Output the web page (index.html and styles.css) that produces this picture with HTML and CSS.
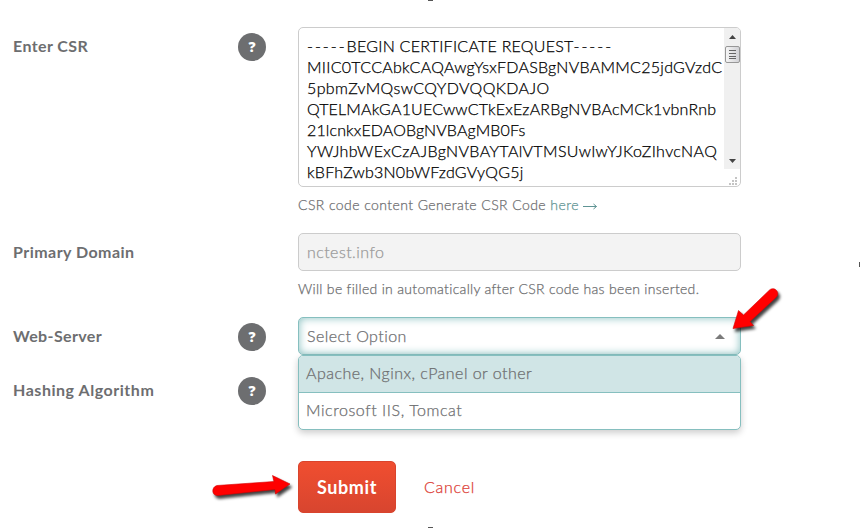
FILE: index.html
```
<!DOCTYPE html>
<html lang="en">
<head>
    <meta charset="UTF-8">
    <meta name="viewport" content="width=device-width, initial-scale=1.0">
    <title>CSR</title>
    <link rel="stylesheet" href="styles.css">
</head>
<body>
    <form class="csr-form">
        <div class="row row-csr">
            <label class="label label-csr">Enter CSR</label>
            <span class="help">?</span>
            <div class="field">
                <div class="csr-box">
                    <div class="csr-text">
                        <div class="line-1"><span class="dashes">-----</span>BEGIN CERTIFICATE REQUEST<span class="dashes">-----</span></div>
                        <div class="line-2">MIIC0TCCAbkCAQAwgYsxFDASBgNVBAMMC25jdGVzdC</div>
                        <div class="line-3">5pbmZvMQswCQYDVQQKDAJO</div>
                        <div class="line-4">QTELMAkGA1UECwwCTkExEzARBgNVBAcMCk1vbnRnb</div>
                        <div class="line-5">21lcnkxEDAOBgNVBAgMB0Fs</div>
                        <div class="line-6">YWJhbWExCzAJBgNVBAYTAlVTMSUwIwYJKoZIhvcNAQ</div>
                        <div class="line-7">kBFhZwb3N0bWFzdGVyQG5j</div>
                    </div>
                    <div class="scroll-side">
                        <div class="scrollbar">
                            <svg class="scroll-arrow" width="7" height="4" viewBox="0 0 7 4"><path d="M0 4L3.5 0L7 4z" fill="#444"/></svg>
                            <div class="thumb"><i></i><i></i><i></i><i></i></div>
                            <svg class="scroll-arrow arrow-down" width="7" height="4" viewBox="0 0 7 4"><path d="M0 0L3.5 4L7 0z" fill="#444"/></svg>
                        </div>
                        <svg class="grip" width="9" height="9" viewBox="0 0 9 9" fill="#c4c4c4">
                            <path d="M6 0h2v2h-2zM3 3h2v2h-2zM6 3h2v2h-2zM0 6h2v2h-2zM3 6h2v2h-2zM6 6h2v2h-2z"/>
                        </svg>
                    </div>
                </div>
                <p class="hint hint-csr">CSR code content Generate CSR Code <a href="#">here <svg width="15" height="7" viewBox="0 0 15 7"><path d="M0 3.5H13.5M10.5 1L13.5 3.5L10.5 6" fill="none" stroke="currentColor"/></svg></a></p>
            </div>
        </div>

        <div class="row row-domain">
            <label class="label label-domain">Primary Domain</label>
            <span></span>
            <div class="field">
                <div class="input disabled">nctest.info</div>
                <p class="hint hint-domain">Will be filled in automatically after CSR code has been inserted.</p>
            </div>
        </div>

        <div class="row row-server">
            <label class="label label-server">Web-Server</label>
            <span class="help">?</span>
            <div class="field select-field">
                <div class="input select">
                    <span>Select Option</span>
                    <svg width="10" height="5" viewBox="0 0 10 5"><path d="M0 5L5 0L10 5z" fill="#7b7b7b"/></svg>
                </div>
                <ul class="options">
                    <li class="active">Apache, Nginx, cPanel or other</li>
                    <li class="iis">Microsoft IIS, Tomcat</li>
                </ul>
            </div>
        </div>

        <div class="row row-hash">
            <label class="label label-hash">Hashing Algorithm</label>
            <span class="help">?</span>
        </div>

        <div class="actions">
            <button type="button" class="submit">Submit</button>
            <a href="#" class="cancel">Cancel</a>
        </div>
    </form>

    <!-- red pointers over the form -->
    <svg class="pointer pointer-select" width="60" height="60" viewBox="0 0 60 60">
        <path d="M3 48.500L8.500 30.500L13.500 35L39.500 10C44 6 51 12 46 17.500L20 41.500L23.500 45.500z" fill="#f00" stroke="#d40000" stroke-width=".6" stroke-linejoin="round"/>
    </svg>
    <svg class="pointer pointer-submit" width="90" height="40" viewBox="0 0 90 40">
        <path d="M80 12L62.500 3.500L64 9.500L7 13.500C1 15 1.500 24 8 23.500L65 17.500L65.500 22z" fill="#f00" stroke="#d40000" stroke-width=".6" stroke-linejoin="round"/>
    </svg>
    <i class="mark mark-top"></i>
    <i class="mark mark-right"></i>
    <i class="mark mark-bottom"></i>
</body>
</html>
```
FILE: styles.css
```
* {
    box-sizing: border-box;
}

body {
    margin: 0;
    position: relative;
    height: 528px;
    overflow: hidden;
    background: #fff;
    font-family: Lato, sans-serif;
    font-size: 16px;
    color: #6d6e70;
}

.csr-form {
    padding: 27px 0 0 13px;
}

.row {
    display: grid;
    grid-template-columns: 225px 60px 443px;
    align-items: start;
}

.row-csr {
    height: 206px;
}

.row-domain {
    height: 84px;
}

.row-server {
    height: 54px;
}

.row-hash {
    height: 90px;
}

.label {
    font-weight: bold;
    line-height: 38px;
}

.label-csr {
    letter-spacing: 0.4px;
}

.label-domain {
    letter-spacing: 0.46px;
}

.label-server {
    letter-spacing: 0.37px;
}

.label-hash {
    letter-spacing: 0.54px;
}

.help {
    width: 28px;
    height: 28px;
    margin-top: 6px;
    border-radius: 50%;
    background: #6d6e70;
    color: #fff;
    font: 800 14px/27px "Open Sans", sans-serif;
    text-align: center;
}

/* light weight, slightly thickened */
.csr-text,
.hint,
.input,
.options,
.cancel {
    font-weight: 300;
    -webkit-text-stroke: 0.25px currentColor;
}

.csr-box {
    display: flex;
    height: 160px;
    border: 1px solid #ccc;
    border-radius: 5px;
    overflow: hidden;
}

.csr-text {
    flex: 1;
    padding: 7px 0 0 8px;
    line-height: 21px;
    color: #000;
    white-space: nowrap;
}

.dashes {
    letter-spacing: 2px;
}

.line-1 {
    letter-spacing: 0.25px;
}

.line-2 {
    letter-spacing: 0.28px;
}

.line-3 {
    letter-spacing: 0.38px;
}

.line-4 {
    letter-spacing: 0.18px;
}

.line-5 {
    letter-spacing: 0.13px;
}

.line-6 {
    letter-spacing: 0.37px;
}

.line-7 {
    letter-spacing: 0.24px;
}

.scroll-side {
    width: 16px;
    display: flex;
    flex-direction: column;
    align-items: flex-end;
}

.scrollbar {
    width: 16px;
    height: 141px;
    display: flex;
    flex-direction: column;
    align-items: center;
    padding: 7px 0 6px;
    background: #f0f0f0;
}

.arrow-down {
    margin-top: auto;
}

.thumb {
    width: 15px;
    height: 17px;
    margin-top: 7px;
    padding: 3px;
    display: flex;
    flex-direction: column;
    gap: 2px;
    border: 1px solid #979797;
    border-radius: 2px;
    background: linear-gradient(to right, #f5f5f5, #d2d2d6);
}

.thumb i {
    height: 1px;
    background: #666;
}

.grip {
    margin: 8px 2px 0 0;
}

.hint {
    margin: 0;
    font-size: 14px;
    line-height: 36px;
}

.hint-csr {
    letter-spacing: 0.42px;
}

.hint-domain {
    letter-spacing: 0.31px;
}

.hint a {
    color: #5f9494;
    text-decoration: none;
}

.input {
    height: 38px;
    padding: 0 8px;
    border: 1px solid #ccc;
    border-radius: 5px;
    line-height: 35px;
    letter-spacing: 0.44px;
}

.disabled {
    background: #f3f3f3;
    color: #999;
}

.select-field {
    position: relative;
}

.select {
    display: flex;
    justify-content: space-between;
    align-items: center;
    padding-right: 15px;
    border-color: #86bfbf;
    box-shadow: inset 0 0 8px #86bfbf;
}

.select span {
    padding-bottom: 1px;
}

/* open list covers the row under the select */
.options {
    position: absolute;
    top: 38px;
    left: 0;
    z-index: 1;
    width: 443px;
    height: 75px;
    margin: 0;
    padding: 0;
    list-style: none;
    border: 1px solid #86bfbf;
    border-radius: 5px;
    background: #fff;
    box-shadow: 0 3px 7px rgba(0, 0, 0, 0.2);
    overflow: hidden;
}

.options li {
    height: 36px;
    padding-left: 7px;
    line-height: 34px;
    letter-spacing: 0.56px;
}

.options .active {
    height: 37px;
    background: #d0e5e6;
    border-bottom: 1px solid #86bfbf;
    letter-spacing: 0.47px;
}

.actions {
    display: flex;
    align-items: center;
    gap: 28px;
    padding-left: 285px;
}

.submit {
    width: 98px;
    height: 52px;
    padding: 0;
    border: 1px solid #d9442d;
    border-radius: 5px;
    background: linear-gradient(#f04e30, #d8452f);
    color: #fff;
    font: bold 18px Lato, sans-serif;
    letter-spacing: 0.6px;
}

.cancel {
    padding-bottom: 2px;
    color: #dc3b33;
    letter-spacing: 0.75px;
    text-decoration: none;
}

.pointer {
    position: absolute;
    z-index: 2;
    filter: drop-shadow(2px 3px 1.5px rgba(0, 0, 0, 0.75));
}

.pointer-select {
    left: 730px;
    top: 280px;
}

.pointer-submit {
    left: 210px;
    top: 472px;
}

.mark {
    position: absolute;
    background: #555;
}

.mark-top {
    left: 428px;
    top: 0;
    width: 5px;
    height: 1px;
}

.mark-right {
    right: 0;
    top: 262px;
    width: 1px;
    height: 5px;
}

.mark-bottom {
    left: 428px;
    bottom: 0;
    width: 5px;
    height: 1px;
}
```
